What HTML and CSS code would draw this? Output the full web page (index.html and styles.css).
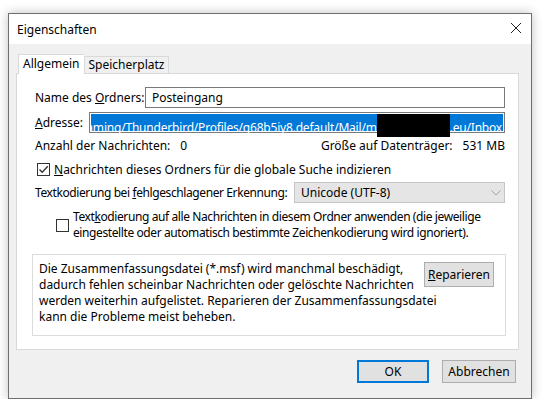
FILE: index.html
```html
<!DOCTYPE html>
<html lang="de">
<head>
    <meta charset="UTF-8">
    <title>Eigenschaften</title>
    <link rel="stylesheet" href="styles.css">
</head>
<body>
    <div class="dialog">
        <div class="titlebar">
            <span class="title">Eigenschaften</span>
            <svg class="close" width="12" height="12" viewBox="0 0 12 12">
                <path d="M1 1 L11 11 M11 1 L1 11" stroke="#222" stroke-width="1" fill="none"/>
            </svg>
        </div>

        <div class="client">
            <div class="tabs">
                <div class="tab active">Allgemein</div>
                <div class="tab">Speicherplatz</div>
            </div>

            <div class="panel">
                <div class="row">
                    <label class="label-name">Name des <u>O</u>rdners:</label>
                    <div class="field">Posteingang</div>
                </div>

                <div class="row">
                    <label class="label-addr"><u>A</u>dresse:</label>
                    <div class="field address">
                        <div class="scroller">
                            <span class="selected">oaming/Thunderbird/Profiles/q68b5iy8.default/Mail/m<span class="blackout"></span>.eu/Inbox</span>
                        </div>
                    </div>
                </div>

                <div class="row stats">
                    <span>Anzahl der Nachrichten:<span class="value">0</span></span>
                    <span>Größe auf Datenträger:<span class="value">531 MB</span></span>
                </div>

                <div class="row check">
                    <span class="checkbox checked">
                        <svg width="11" height="11" viewBox="0 0 11 11">
                            <path d="M1.5 5.5 L4.2 8.3 L9.8 2.2" stroke="#333" stroke-width="1.3" fill="none"/>
                        </svg>
                    </span>
                    <span><u>N</u>achrichten dieses Ordners für die globale Suche indizieren</span>
                </div>

                <div class="row">
                    <label class="label-enc">Textkodierung bei <u>f</u>ehlgeschlagener Erkennung:</label>
                    <div class="select">
                        <span>Unicode (UTF-8)</span>
                        <svg width="10" height="6" viewBox="0 0 10 6">
                            <path d="M0.5 0.5 L5 5 L9.5 0.5" stroke="#a0a0a0" stroke-width="1" fill="none"/>
                        </svg>
                    </div>
                </div>

                <div class="row check sub">
                    <span class="checkbox"></span>
                    <span class="wrap">Text<u>k</u>odierung auf alle Nachrichten in diesem Ordner anwenden (die jeweilige<br>eingestellte oder automatisch bestimmte Zeichenkodierung wird ignoriert).</span>
                </div>

                <div class="groupbox">
                    <p>Die Zusammenfassungsdatei (*.msf) wird manchmal beschädigt,<br>dadurch fehlen scheinbar Nachrichten oder gelöschte Nachrichten<br>werden weiterhin aufgelistet. Reparieren der Zusammenfassungsdatei<br>kann die Probleme meist beheben.</p>
                    <button class="btn repair"><u>R</u>eparieren</button>
                </div>
            </div>

            <div class="buttons">
                <button class="btn default">OK</button>
                <button class="btn">Abbrechen</button>
            </div>
        </div>
    </div>
</body>
</html>
```

FILE: styles.css
```css
body {
    font-family: "Noto Sans", sans-serif;
    font-size: 12px;
    color: #000;
    background-color: #ffffff;
    margin: 0;
    padding: 13px 0 0 8px;
}

.dialog {
    width: 522px;
    height: 384px;
    border: 1px solid #6f6f6f;
    background-color: #f0f0f0;
    box-shadow: 0 0 10px rgba(0, 0, 0, 0.25);
    display: flex;
    flex-direction: column;
}

.titlebar {
    height: 30px;
    background-color: #ffffff;
    display: flex;
    align-items: center;
    justify-content: space-between;
    padding: 0 9px 0 8px;
}

.close {
    margin-top: -2px;
}

.client {
    flex: 1;
    display: flex;
    flex-direction: column;
    padding: 9px 12px 0 7px;
}

/* tab strip */
.tabs {
    display: flex;
    align-items: flex-end;
    padding-left: 2px;
    height: 20px;
}

.tab {
    height: 17px;
    line-height: 16px;
    padding: 0 4px;
    border: 1px solid #d9d9d9;
    border-bottom: none;
    background-color: #f0f0f0;
    box-sizing: border-box;
}

.tab.active {
    height: 20px;
    background-color: #ffffff;
    line-height: 18px;
    margin-bottom: -1px;
    position: relative;
    border-right: none;
}

.panel {
    height: 277px;
    box-sizing: border-box;
    border: 1px solid #d9d9d9;
    background-color: #ffffff;
    padding: 13px 13px 0 18px;
}

.row {
    display: flex;
    align-items: center;
    height: 21px;
    margin-bottom: 4px;
}

.row label {
    flex-shrink: 0;
}

.label-name {
    width: 110px;
}

.label-addr {
    width: 54px;
}

.label-enc {
    width: 259px;
    white-space: nowrap;
    letter-spacing: -0.4px;
}

.field {
    flex: 1;
    min-width: 0;
    height: 21px;
    box-sizing: border-box;
    border: 1px solid #7a7a7a;
    background-color: #ffffff;
    padding: 0 6px;
    line-height: 19px;
}

.field.address {
    padding: 0 1px;
}

/* path is scrolled to its end, the start is clipped */
.scroller {
    display: flex;
    justify-content: flex-end;
    height: 19px;
    align-items: center;
    clip-path: inset(-5px 0 -5px 0);
}

.selected {
    flex-shrink: 0;
    white-space: nowrap;
    background-color: #0078d7;
    color: #ffffff;
    height: 17px;
    line-height: 16px;
    padding-right: 1px;
    letter-spacing: -0.2px;
}

.blackout {
    display: inline-block;
    width: 73px;
    height: 27px;
    background-color: #000;
    vertical-align: -9px;
}

.stats {
    justify-content: space-between;
    height: 16px;
    margin: 2px 0 8px 0;
}

.stats .value {
    margin-left: 10px;
}

.check {
    height: 16px;
    margin-bottom: 5px;
}

.checkbox {
    flex-shrink: 0;
    width: 13px;
    height: 13px;
    box-sizing: border-box;
    border: 1px solid #333;
    background-color: #fff;
    margin: 0 4px 0 2px;
    display: flex;
    align-items: center;
    justify-content: center;
}

.select {
    flex: 1;
    height: 21px;
    box-sizing: border-box;
    border: 1px solid #c5c5c5;
    background-color: #e5e5e5;
    display: flex;
    align-items: center;
    justify-content: space-between;
    padding: 0 3px 0 6px;
}

.check.sub {
    height: 34px;
    margin: 5px 0 0 0;
    align-items: center;
}

.check.sub .checkbox {
    margin-left: 21px;
}

.wrap {
    line-height: 16px;
    white-space: nowrap;
    letter-spacing: -0.4px;
}

.groupbox {
    margin: 12px -1px 0 -3px;
    height: 82px;
    box-sizing: border-box;
    border: 1px solid #dcdcdc;
    background-color: #ffffff;
    display: grid;
    grid-template-columns: minmax(0, 1fr) 70px;
    align-items: start;
    padding: 6px 11px 0 6px;
}

.groupbox p {
    margin: 0;
    line-height: 16px;
    white-space: nowrap;
}

.btn {
    font-family: inherit;
    font-size: 12px;
    color: #000;
    background-color: #e1e1e1;
    border: 1px solid #adadad;
    border-radius: 0;
    padding: 0;
    height: 23px;
    cursor: default;
}

.repair {
    width: 70px;
    height: 25px;
    margin-top: 1px;
}

.buttons {
    display: flex;
    justify-content: flex-end;
    gap: 13px;
    padding: 10px 3px 0 0;
}

.buttons .btn {
    width: 74px;
}

.btn.default {
    width: 72px;
    border: 2px solid #0078d7;
}
```
